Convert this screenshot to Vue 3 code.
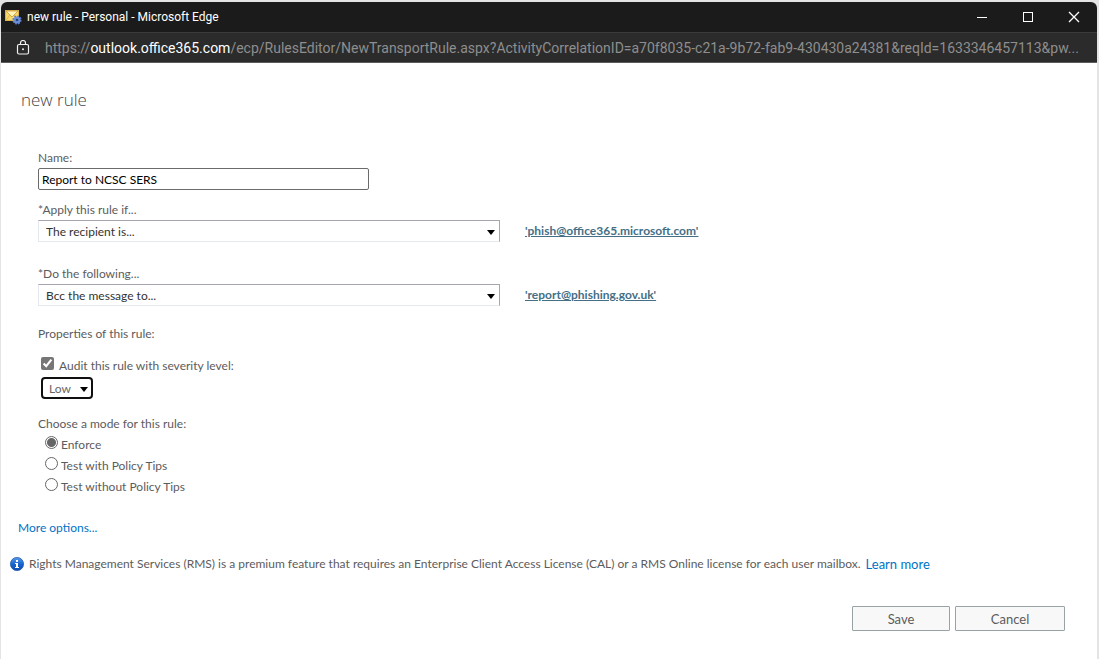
<script setup>
import { ref } from 'vue'

const name = ref('Report to NCSC SERS')
const condition = ref('The recipient is...')
const action = ref('Bcc the message to...')
const audit = ref(true)
const severity = ref('Low')
const mode = ref('Enforce')
const modes = ['Enforce', 'Test with Policy Tips', 'Test without Policy Tips']
</script>

<template>
  <div class="desktop">
    <div class="window">
      <header class="titlebar">
        <svg class="app-icon" width="17" height="16" viewBox="0 0 17 16" aria-hidden="true">
          <rect x="0.5" y="1.5" width="13" height="10" fill="#f5d66b" stroke="#d9b04e" />
          <path d="M1 2h12L7 8z" fill="#fff3b8" stroke="#c9983a" stroke-width="0.8" />
          <path d="M1 11l4-5M13 11l-4-5" stroke="#d7ac45" stroke-width="0.8" />
          <circle cx="12" cy="11" r="3.6" fill="#7f9fe0" stroke="#5b7cc8" stroke-width="2" stroke-dasharray="1.7 1.1" />
          <circle cx="12" cy="11" r="3" fill="#6d8fd6" />
          <circle cx="12" cy="11" r="1.3" fill="#27427f" />
        </svg>
        <h1 class="title">new rule - Personal - Microsoft Edge</h1>
        <div class="controls">
          <button type="button" class="control" aria-label="Minimize">
            <svg width="12" height="12" viewBox="0 0 12 12"><path d="M1 6.5h10" stroke="#fff" /></svg>
          </button>
          <button type="button" class="control" aria-label="Maximize">
            <svg width="12" height="12" viewBox="0 0 12 12"><rect x="1.5" y="1.5" width="9" height="9" fill="none" stroke="#fff" /></svg>
          </button>
          <button type="button" class="control" aria-label="Close">
            <svg width="12" height="12" viewBox="0 0 12 12"><path d="M1 1l10 10M11 1L1 11" stroke="#fff" stroke-width="1.3" /></svg>
          </button>
        </div>
      </header>

      <div class="addressbar">
        <svg class="lock" width="14" height="16" viewBox="0 0 14 16" aria-hidden="true">
          <rect x="1.5" y="4.5" width="11" height="9.5" rx="1.5" fill="none" stroke="#f2f2f2" stroke-width="1.2" />
          <path d="M4.5 4.5V3a2.5 2.5 0 0 1 5 0v1.5" fill="none" stroke="#f2f2f2" stroke-width="1.2" />
          <circle cx="7" cy="9.3" r="1" fill="#f2f2f2" />
        </svg>
        <div class="url">https://<b>outlook.office365.com</b>/ecp/RulesEditor/NewTransportRule.aspx?ActivityCorrelationID=a70f8035-c21a-9b72-fab9-430430a24381&amp;reqId=1633346457113&amp;pw...</div>
      </div>

      <main class="page">
        <h2 class="heading">new rule</h2>

        <form class="form" @submit.prevent>
          <label class="label" for="rule-name">Name:</label>
          <input id="rule-name" v-model="name" class="name" type="text">

          <label class="label spaced" for="condition">*Apply this rule if...</label>
          <div class="row">
            <div class="picker">
              <select id="condition" v-model="condition"><option>The recipient is...</option></select>
              <svg class="arrow" width="8" height="5" viewBox="0 0 8 5" aria-hidden="true"><path d="M0 0h8L4 5z" /></svg>
            </div>
            <a class="value" href="#">'phish@office365.microsoft.com'</a>
          </div>

          <label class="label parted" for="action">*Do the following...</label>
          <div class="row">
            <div class="picker">
              <select id="action" v-model="action"><option>Bcc the message to...</option></select>
              <svg class="arrow" width="8" height="5" viewBox="0 0 8 5" aria-hidden="true"><path d="M0 0h8L4 5z" /></svg>
            </div>
            <a class="value" href="#">'report@phishing.gov.uk'</a>
          </div>

          <p class="label group">Properties of this rule:</p>
          <div class="audit">
            <input id="audit" v-model="audit" class="check" type="checkbox">
            <label for="audit">Audit this rule with severity level:</label>
          </div>
          <div class="picker severity">
            <select v-model="severity" aria-label="Severity level"><option>Low</option></select>
            <svg class="arrow" width="8" height="5" viewBox="0 0 8 5" aria-hidden="true"><path d="M0 0h8L4 5z" /></svg>
          </div>

          <fieldset class="modes">
            <legend class="label">Choose a mode for this rule:</legend>
            <div class="mode-list">
              <div v-for="(m, i) in modes" :key="m" class="mode">
                <input :id="'mode-' + i" v-model="mode" class="radio" type="radio" name="mode" :value="m">
                <label :for="'mode-' + i">{{ m }}</label>
              </div>
            </div>
          </fieldset>
        </form>

        <a class="more" href="#">More options...</a>

        <p class="notice">
          <svg class="info" width="14" height="14" viewBox="0 0 14 14" aria-hidden="true">
            <defs>
              <linearGradient id="info-fill" x1="0" y1="0" x2="0" y2="1">
                <stop offset="0" stop-color="#5a9be6" />
                <stop offset="0.5" stop-color="#1765cf" />
                <stop offset="1" stop-color="#0a4cae" />
              </linearGradient>
            </defs>
            <circle cx="7" cy="7" r="6.6" fill="url(#info-fill)" stroke="#2560b4" stroke-width="0.8" />
            <path d="M6 3h2v2H6zM5 6h3v4h1v1H5v-1h1V7H5z" fill="#fff" />
          </svg>
          <span>Rights Management Services (RMS) is a premium feature that requires an Enterprise Client Access License (CAL) or a RMS Online license for each user mailbox.</span>
          <a class="learn" href="#">Learn more</a>
        </p>

        <div class="actions">
          <button type="button" class="btn save">Save</button>
          <button type="button" class="btn cancel">Cancel</button>
        </div>
      </main>
    </div>
  </div>
</template>

<style>
body {
  margin: 0;
  background: #f0f0f0;
}
</style>

<style scoped>
* {
  box-sizing: border-box;
}

.desktop {
  min-height: 100vh;
  padding: 2px 2px 0 1px;
  display: flex;
  background: #e4e4e4;
  font-family: Lato, "Open Sans", sans-serif;
  font-size: 12px;
  line-height: 16px;
  color: #5c5c5c;
}

.window {
  flex: 1;
  min-width: 0;
  display: flex;
  flex-direction: column;
  background: #fff;
  border-radius: 6px 6px 0 0;
  overflow: hidden;
}

.titlebar {
  display: flex;
  align-items: center;
  height: 30px;
  padding-left: 4px;
  background: #1b1b1b;
  color: #fff;
}

.app-icon {
  flex: none;
}

.title {
  flex: 1;
  margin: 0 0 0 5px;
  font-family: Roboto, sans-serif;
  font-size: 12px;
  font-weight: 400;
  white-space: nowrap;
}

.controls {
  display: flex;
}

.control {
  width: 46px;
  height: 30px;
  padding: 0;
  border: 0;
  background: transparent;
  display: flex;
  align-items: center;
  justify-content: center;
}

.addressbar {
  display: flex;
  align-items: center;
  gap: 15px;
  height: 31px;
  padding: 0 16px 0 15px;
  background: #2b2b2b;
  border-top: 1px solid #3b3b3b;
  border-bottom: 1px solid #5c5c5c;
}

.lock {
  flex: none;
}

.url {
  min-width: 0;
  font-family: Roboto, sans-serif;
  font-size: 14px;
  line-height: 20px;
  color: #8e8e8e;
  white-space: nowrap;
  overflow: hidden;
}

.url b {
  font-weight: 400;
  color: #fff;
}

.page {
  flex: 1;
  display: flex;
  flex-direction: column;
}

.heading {
  margin: 25px 0 0 20px;
  font-family: "Open Sans", sans-serif;
  font-size: 17px;
  line-height: 24px;
  font-weight: 300;
  color: #444;
}

.form {
  margin: 38px 0 0 37px;
}

.label {
  display: block;
  margin: 0;
  padding: 0;
}

.spaced {
  margin-top: 12px;
}

.parted {
  margin-top: 24px;
}

.group {
  margin-top: 20px;
}

.name {
  display: block;
  width: 331px;
  height: 22px;
  margin-top: 2px;
  padding: 0 3px;
  border: 1px solid #6b6b6b;
  border-radius: 2px;
  background: #fff;
  font: inherit;
  color: #000;
}

.row {
  display: flex;
  align-items: center;
  gap: 25px;
  margin-top: 2px;
}

.picker {
  position: relative;
  width: 462px;
}

select {
  display: block;
  width: 100%;
  height: 22px;
  padding: 1px 20px 0 7px;
  appearance: none;
  border: 1px solid;
  border-color: #a6a6b0 #a6a6b0 #e3e9ef #e3e9ef;
  border-radius: 0;
  background: #fff;
  font: inherit;
  color: #333;
}

.arrow {
  position: absolute;
  right: 5px;
  top: 10px;
  pointer-events: none;
}

.value {
  font-weight: 700;
  color: #456f86;
}

.audit {
  display: flex;
  align-items: center;
  gap: 5px;
  margin: 15px 0 3px 3px;
}

.check,
.radio {
  flex: none;
  width: 13px;
  height: 13px;
  margin: 0 0 4px;
  accent-color: #767676;
}

.severity {
  width: 52px;
  margin-left: 3px;
}

.severity select {
  border: 2px solid #101010;
  border-radius: 4px;
  padding-left: 6px;
  color: #666;
}

.modes {
  margin: 17px 0 0;
  padding: 0;
  border: 0;
}

.mode-list {
  padding-top: 2px;
}

.mode {
  display: flex;
  align-items: center;
  gap: 3px;
  height: 21px;
  padding-left: 7px;
}

.radio {
  appearance: none;
  border: 1px solid #666;
  border-radius: 50%;
  background: #fff;
}

.radio:checked {
  background: radial-gradient(circle, #666 0 4px, #fff 5px);
}

.more {
  align-self: flex-start;
  margin: 23px 0 0 17px;
  color: #0072c6;
  text-decoration: none;
}

.notice {
  display: flex;
  align-items: center;
  gap: 5px;
  margin: 20px 0 0 9px;
  white-space: nowrap;
}

.info {
  flex: none;
}

.learn {
  font-size: 13px;
  color: #0072c6;
  text-decoration: none;
}

.actions {
  display: flex;
  justify-content: flex-end;
  gap: 5px;
  margin: 34px 32px 27px 0;
}

.btn {
  height: 25px;
  padding: 0;
  border: 1px solid #98a3a6;
  border-radius: 1px;
  background: #f8f8f8;
  font: inherit;
  font-size: 13px;
  color: #5c5c5c;
}

.save {
  width: 98px;
}

.cancel {
  width: 110px;
}
</style>
